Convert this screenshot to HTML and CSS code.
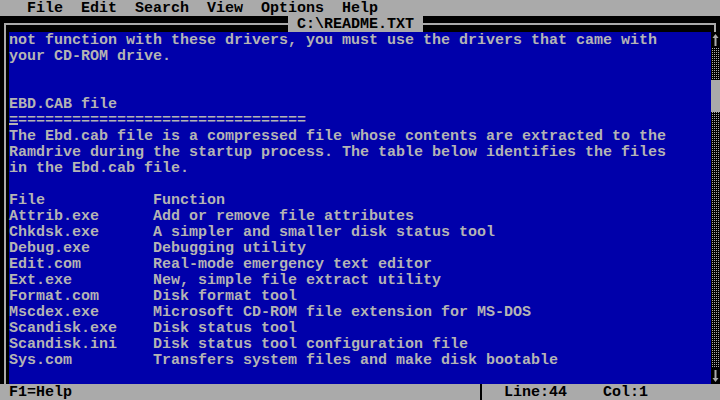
FILE: index.html
```html
<!DOCTYPE html>
<html>
<head>
<meta charset="utf-8">
<title>C:\README.TXT</title>
<link rel="stylesheet" href="styles.css">
</head>
<body>
<div class="screen">
  <div class="menubar">   File  Edit  Search  View  Options  Help</div>
  <div class="topbar">
    <div class="seg seg-left"></div>
    <div class="title"> C:\README.TXT </div>
    <div class="seg seg-right"></div>
  </div>
  <div class="body">
    <div class="lborder"></div>
    <div class="text"><div class="line">not function with these drivers, you must use the drivers that came with</div><div class="line">your CD-ROM drive.</div><div class="line"> </div><div class="line"> </div><div class="line">EBD.CAB file</div><div class="line cursor-line">=================================<span class="cursor"></span></div><div class="line">The Ebd.cab file is a compressed file whose contents are extracted to the</div><div class="line">Ramdrive during the startup process. The table below identifies the files</div><div class="line">in the Ebd.cab file.</div><div class="line"> </div><div class="line">File            Function</div><div class="line">Attrib.exe      Add or remove file attributes</div><div class="line">Chkdsk.exe      A simpler and smaller disk status tool</div><div class="line">Debug.exe       Debugging utility</div><div class="line">Edit.com        Real-mode emergency text editor</div><div class="line">Ext.exe         New, simple file extract utility</div><div class="line">Format.com      Disk format tool</div><div class="line">Mscdex.exe      Microsoft CD-ROM file extension for MS-DOS</div><div class="line">Scandisk.exe    Disk status tool</div><div class="line">Scandisk.ini    Disk status tool configuration file</div><div class="line">Sys.com         Transfers system files and make disk bootable</div></div>
    <div class="scrollbar">
      <div class="arrow"><svg width="9" height="16" viewBox="0 0 9 16"><polygon points="4.5,2 1.5,6 3.5,6 3.5,14 5.5,14 5.5,6 7.5,6" fill="#aaaaaa"/></svg></div>
      <div class="track track-top"></div>
      <div class="thumb"></div>
      <div class="track track-rest"></div>
      <div class="arrow"><svg width="9" height="16" viewBox="0 0 9 16"><polygon points="4.5,14 1.5,10 3.5,10 3.5,2 5.5,2 5.5,10 7.5,10" fill="#aaaaaa"/></svg></div>
    </div>
  </div>
  <div class="statusbar"> F1=Help                                             <span class="sep"></span>  Line:44    Col:1</div>
</div>
</body>
</html>
```
FILE: styles.css
```css
html, body {
  margin: 0;
  padding: 0;
  background: #000;
}
body {
  width: 720px;
  height: 400px;
  overflow: hidden;
}
.screen {
  display: grid;
  grid-template-rows: 16px 16px 352px 16px;
  width: 720px;
  height: 400px;
  font-family: "Liberation Mono", "DejaVu Sans Mono", monospace;
  font-size: 15px;
  line-height: 16px;
  font-weight: bold;
  white-space: pre;
}
.menubar {
  box-sizing: border-box;
  padding-top: 1px;
  background: #aaaaaa;
  color: #000;
}
.topbar {
  display: grid;
  grid-template-columns: 288px 135px 1fr;
  background: #000;
}
.seg {
  margin-top: 7px;
  border-top: 2px solid #aaaaaa;
}
.seg-left {
  margin-left: 4px;
  border-left: 2px solid #aaaaaa;
}
.seg-right {
  margin-right: 4px;
  border-right: 2px solid #aaaaaa;
}
.title {
  box-sizing: border-box;
  padding-top: 1px;
  background: #aaaaaa;
  color: #000;
}
.body {
  display: grid;
  grid-template-columns: 9px 702px 9px;
}
.lborder {
  background: linear-gradient(to right, #000 4px, #aaaaaa 4px, #aaaaaa 6px, #000 6px);
}
.text {
  box-sizing: border-box;
  padding-top: 1px;
  background: #0000aa;
  color: #b4b4b4;
}
.line {
  height: 16px;
}
.cursor-line {
  position: relative;
}
.cursor {
  position: absolute;
  left: 0;
  top: 10px;
  width: 9px;
  height: 2px;
  background: #b4b4b4;
}
.scrollbar {
  display: flex;
  flex-direction: column;
  background: #000;
}
.arrow {
  height: 16px;
  background: #000;
}
.arrow svg {
  display: block;
}
.track {
  background-color: #000;
  background-image: conic-gradient(#aaaaaa 0 25%, #000 0);
  background-size: 2px 2px;
}
.track-top {
  height: 32px;
}
.thumb {
  height: 32px;
  background: #aaaaaa;
}
.track-rest {
  flex: 1;
}
.statusbar {
  box-sizing: border-box;
  padding-top: 1px;
  background: #aaaaaa;
  color: #000;
}
.sep {
  display: inline-block;
  width: 9px;
  height: 16px;
  margin-top: -1px;
  vertical-align: top;
  background: linear-gradient(to right, transparent 3px, #000 3px, #000 5px, transparent 5px);
}
```
